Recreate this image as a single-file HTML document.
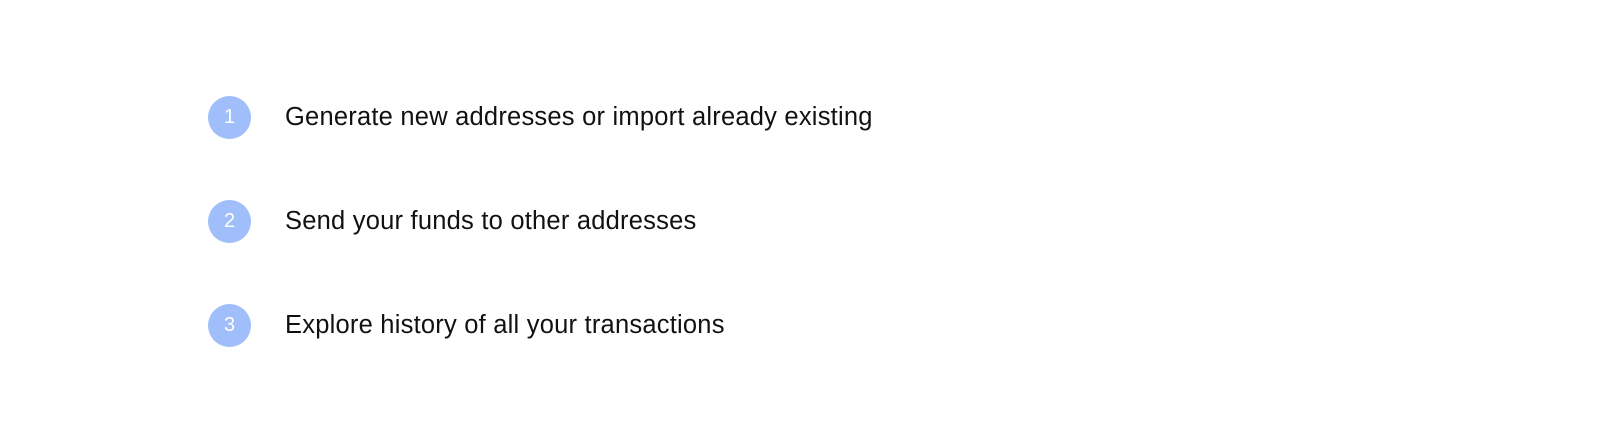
<!DOCTYPE html>
<html><head><style>
body{margin:0;width:1600px;height:422px;background:#fff;font-family:"Liberation Sans",sans-serif;position:relative;overflow:hidden}
.r{position:absolute;left:208px;display:flex;align-items:center}
.c{width:43px;height:43px;border-radius:50%;background:#9fbefa;color:#fff;font-size:20px;display:flex;align-items:center;justify-content:center}
.t{margin-left:34px;font-size:25.5px;letter-spacing:0.22px;color:#111}
</style></head><body>
<div class="r" style="top:96px"><div class="c">1</div><div class="t">Generate new addresses or import already existing</div></div>
<div class="r" style="top:200px"><div class="c">2</div><div class="t">Send your funds to other addresses</div></div>
<div class="r" style="top:304px"><div class="c">3</div><div class="t">Explore history of all your transactions</div></div>
</body></html>
